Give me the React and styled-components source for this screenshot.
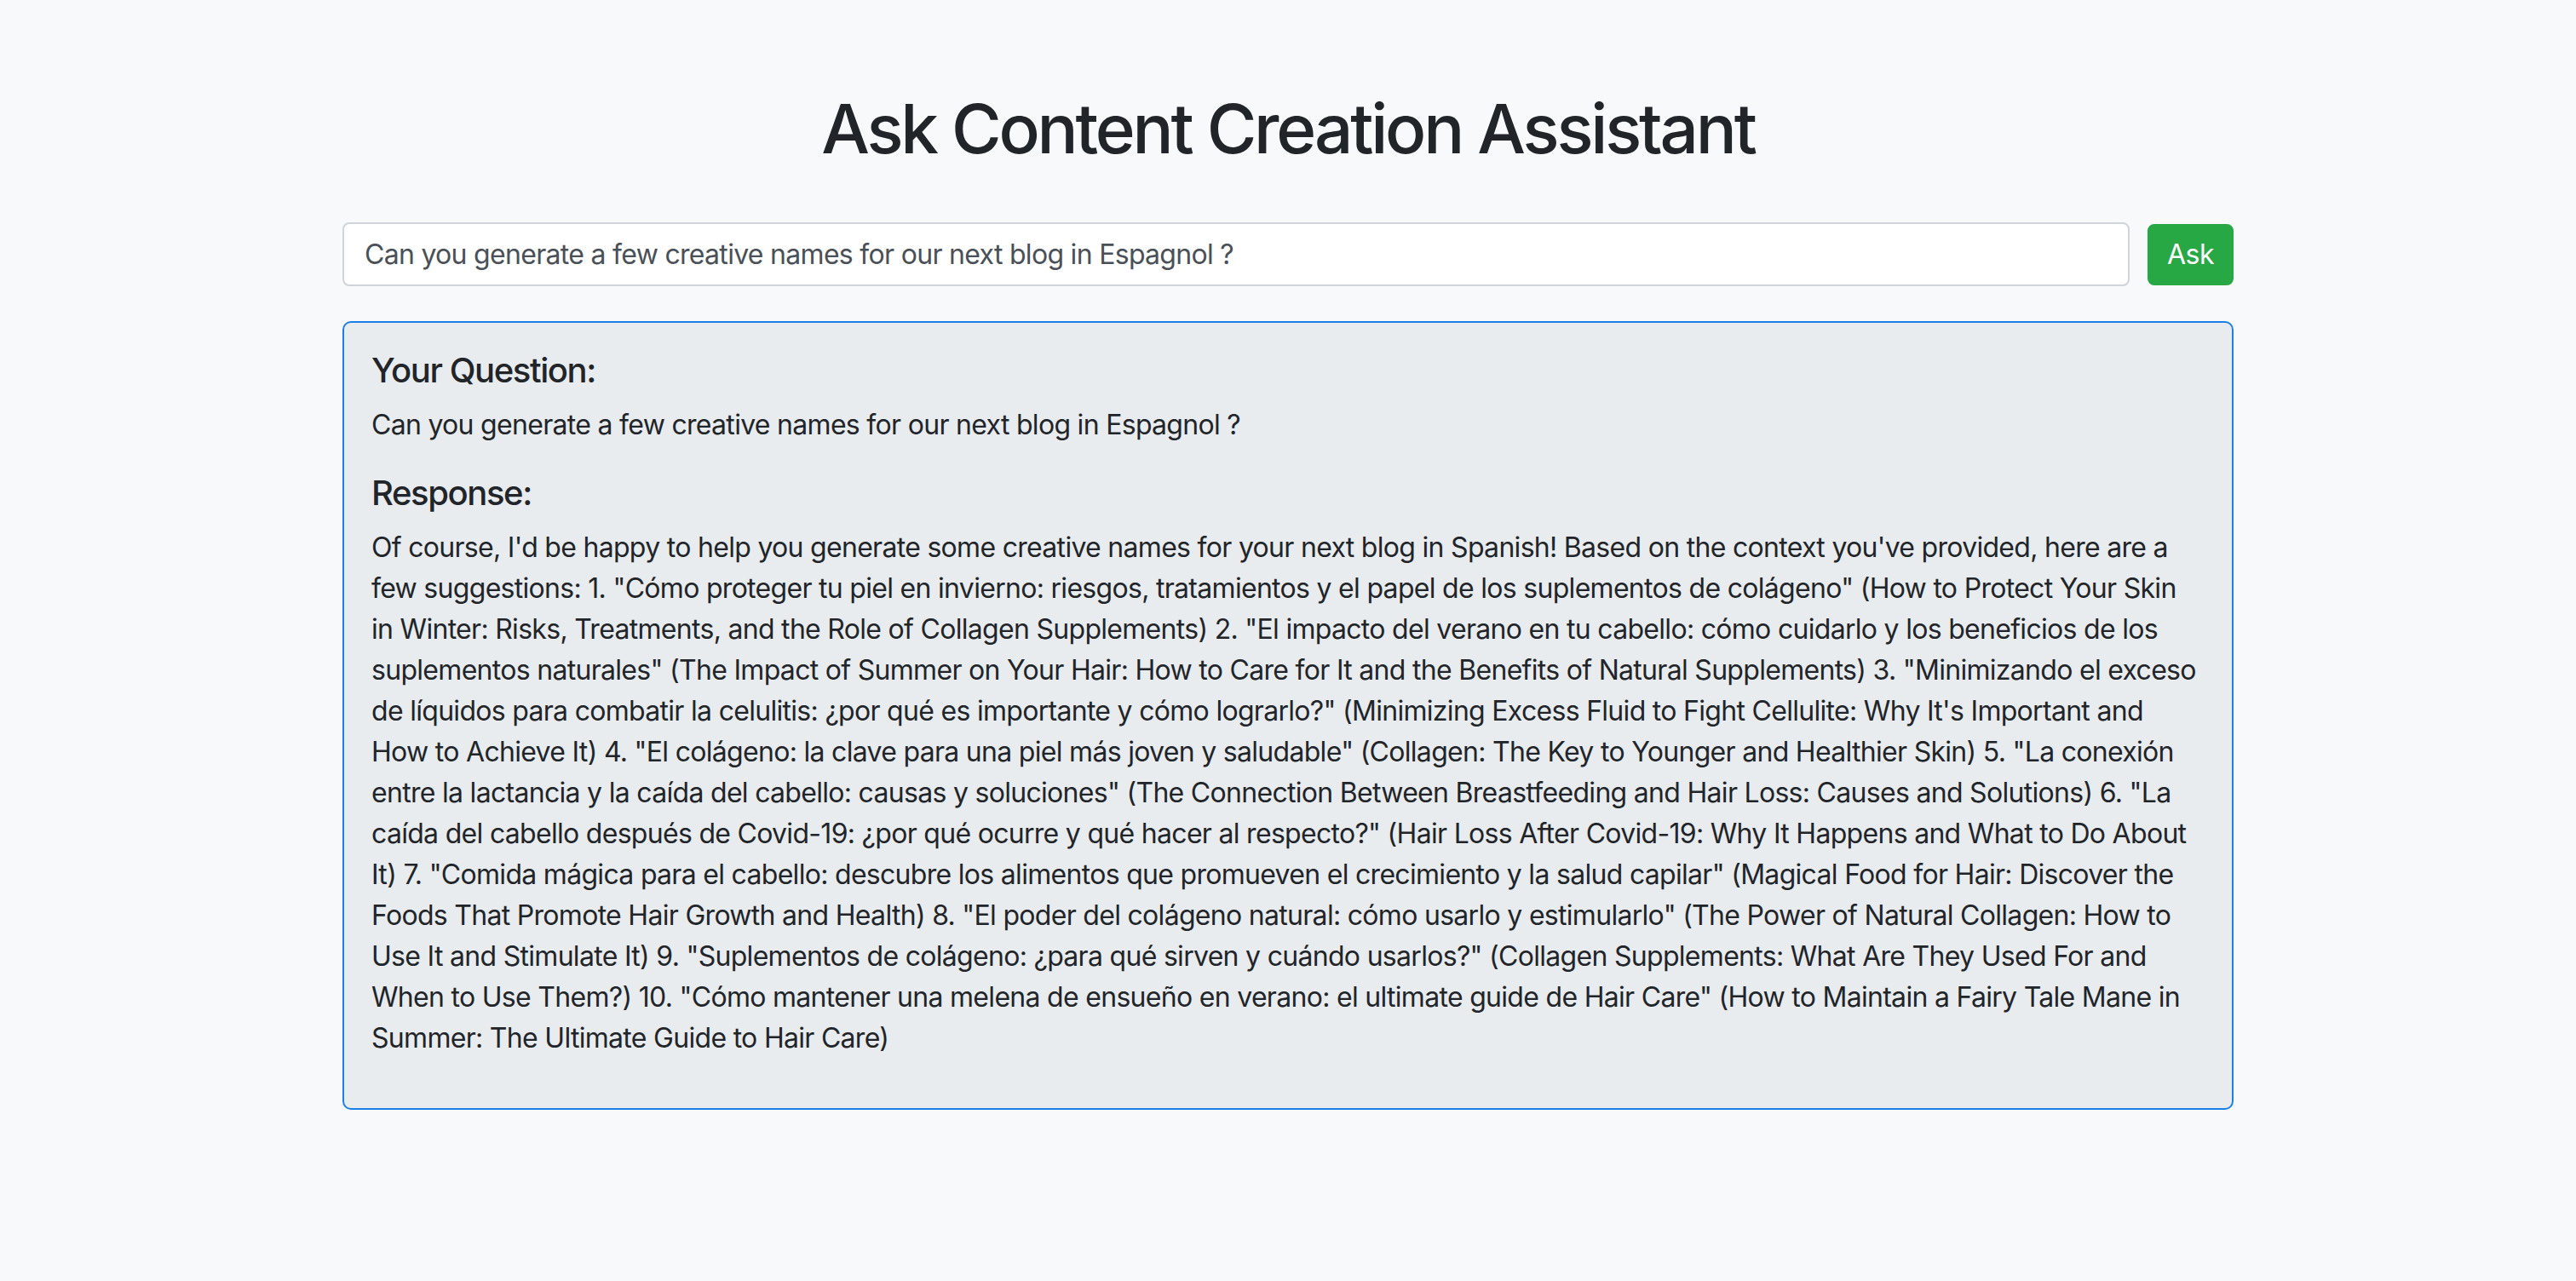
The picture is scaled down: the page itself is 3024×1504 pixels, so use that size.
import React from "react";
import styled, { createGlobalStyle } from "styled-components";

const GlobalStyle = createGlobalStyle`
  html, body {
    margin: 0;
    padding: 0;
    background: #f8f9fa;
  }
  body {
    font-family: Inter, "Noto Sans", "Liberation Sans", sans-serif;
    font-size: 32px;
    line-height: 1.5;
    color: #212529;
    min-height: 1504px;
  }
  * { box-sizing: border-box; }
`;

const Container = styled.main`
  width: 2220px;
  margin: 0 auto;
  padding-top: 103px;
`;

const Title = styled.h1`
  margin: 0 0 62px;
  font-size: 80px;
  font-weight: 500;
  line-height: 1.2;
  text-align: center;
  letter-spacing: -3.2px;
`;

const AskForm = styled.form`
  display: flex;
  align-items: center;
  gap: 21px;
  margin: 0 0 41px;
`;

const QuestionInput = styled.input`
  flex: 1;
  height: 75px;
  padding: 12px 24px;
  font-family: inherit;
  font-size: 32px;
  line-height: 1.5;
  letter-spacing: -0.7px;
  color: #495057;
  background: #fff;
  border: 2px solid #ced4da;
  border-radius: 8px;
  outline: none;
`;

const AskButton = styled.button`
  width: 101px;
  height: 72px;
  padding: 0;
  font-family: inherit;
  font-size: 32px;
  line-height: 1.5;
  letter-spacing: -0.5px;
  color: #fff;
  background: #28a745;
  border: 2px solid #28a745;
  border-radius: 8px;
  cursor: pointer;
`;

const AnswerPanel = styled.section`
  background: #e9ecef;
  border: 2px solid #1a7fe6;
  border-radius: 10px;
  padding: 32px 32px 26px;
`;

const SectionHeading = styled.h5`
  margin: 0 0 16px;
  font-size: 40px;
  font-weight: 500;
  line-height: 1.2;
  letter-spacing: -1.4px;
`;

const Paragraph = styled.p`
  margin: 0 0 32px;
  letter-spacing: -0.7px;
`;

const Line = styled.span`
  display: block;
  white-space: nowrap;
`;

const question = "Can you generate a few creative names for our next blog in Espagnol ?";

const responseLines = [
  "Of course, I'd be happy to help you generate some creative names for your next blog in Spanish! Based on the context you've provided, here are a",
  "few suggestions: 1. \"Cómo proteger tu piel en invierno: riesgos, tratamientos y el papel de los suplementos de colágeno\" (How to Protect Your Skin",
  "in Winter: Risks, Treatments, and the Role of Collagen Supplements) 2. \"El impacto del verano en tu cabello: cómo cuidarlo y los beneficios de los",
  "suplementos naturales\" (The Impact of Summer on Your Hair: How to Care for It and the Benefits of Natural Supplements) 3. \"Minimizando el exceso",
  "de líquidos para combatir la celulitis: ¿por qué es importante y cómo lograrlo?\" (Minimizing Excess Fluid to Fight Cellulite: Why It's Important and",
  "How to Achieve It) 4. \"El colágeno: la clave para una piel más joven y saludable\" (Collagen: The Key to Younger and Healthier Skin) 5. \"La conexión",
  "entre la lactancia y la caída del cabello: causas y soluciones\" (The Connection Between Breastfeeding and Hair Loss: Causes and Solutions) 6. \"La",
  "caída del cabello después de Covid-19: ¿por qué ocurre y qué hacer al respecto?\" (Hair Loss After Covid-19: Why It Happens and What to Do About",
  "It) 7. \"Comida mágica para el cabello: descubre los alimentos que promueven el crecimiento y la salud capilar\" (Magical Food for Hair: Discover the",
  "Foods That Promote Hair Growth and Health) 8. \"El poder del colágeno natural: cómo usarlo y estimularlo\" (The Power of Natural Collagen: How to",
  "Use It and Stimulate It) 9. \"Suplementos de colágeno: ¿para qué sirven y cuándo usarlos?\" (Collagen Supplements: What Are They Used For and",
  "When to Use Them?) 10. \"Cómo mantener una melena de ensueño en verano: el ultimate guide de Hair Care\" (How to Maintain a Fairy Tale Mane in",
  "Summer: The Ultimate Guide to Hair Care)",
];

export default function App() {
  return (
    <>
      <GlobalStyle />
      <Container>
        <Title>Ask Content Creation Assistant</Title>
        <AskForm onSubmit={(e) => e.preventDefault()}>
          <QuestionInput type="text" defaultValue={question} />
          <AskButton type="submit">Ask</AskButton>
        </AskForm>
        <AnswerPanel>
          <SectionHeading>Your Question:</SectionHeading>
          <Paragraph>{question}</Paragraph>
          <SectionHeading>Response:</SectionHeading>
          <Paragraph>
            {responseLines.map((line, i) => (
              <Line key={i}>{line}</Line>
            ))}
          </Paragraph>
        </AnswerPanel>
      </Container>
    </>
  );
}
